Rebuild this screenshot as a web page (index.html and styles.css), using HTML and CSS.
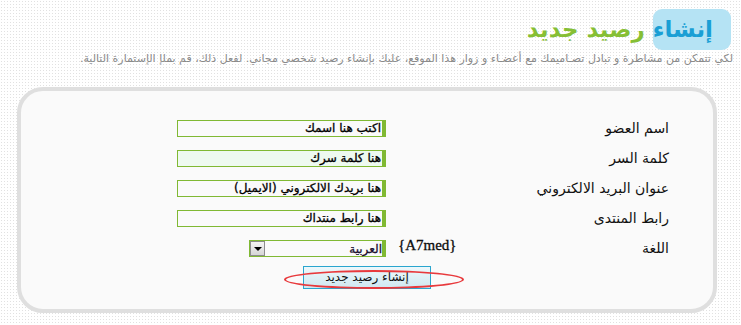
FILE: index.html
```html
<!DOCTYPE html>
<html lang="ar" dir="rtl">
<head>
    <meta charset="UTF-8">
    <title>إنشاء رصيد جديد</title>
    <link rel="stylesheet" href="styles.css">
</head>
<body>
    <div class="header">
        <h1><span class="first">إنشاء</span> رصيد جديد</h1>
        <p class="intro">لكي تتمكن من مشاطرة و تبادل تصـاميمك مع أعضـاء و زوار هذا الموقع، عليك بإنشاء رصيد شخصي مجاني. لفعل ذلك، قم بملإ الإستمارة التالية.</p>
    </div>

    <div class="panel">
        <form class="signup">
            <label>اسم العضو</label>
            <div class="field">اكتب هنا اسمك</div>

            <label>كلمة السر</label>
            <div class="field soft">هنا كلمة سرك</div>

            <label>عنوان البريد الالكتروني</label>
            <div class="field">هنا بريدك الالكتروني (الايميل)</div>

            <label>رابط المنتدى</label>
            <div class="field">هنا رابط منتداك</div>

            <label class="lang">اللغة <span class="tag">{A7med}</span></label>
            <div class="select-wrap">
                <div class="select">
                    <span>العربية</span>
                    <span class="arrow"></span>
                </div>
            </div>
        </form>
        <div class="actions">
            <div class="btn">إنشاء رصيد جديد<span class="circle"></span></div>
        </div>
    </div>
</body>
</html>
```

FILE: styles.css
```css
body {
    margin: 0;
    width: 741px;
    height: 325px;
    overflow: hidden;
    font-family: Tahoma, "DejaVu Sans", sans-serif;
    background-color: #fff;
    background-image: radial-gradient(#e1e1e1 0.9px, transparent 1px);
    background-size: 3px 3px;
}
.header {
    padding: 9px 10px 0 0;
}
.header h1 {
    margin: 0;
    font-size: 23px;
    line-height: 41px;
    color: #86bf35;
}
.header .first {
    display: inline-block;
    color: #1a9fd5;
    background: #b5e3f4;
    border-radius: 9px;
    padding: 0 18px 0 0;
}
.intro {
    margin: 2px -2px 0 0;
    font-size: 11px;
    line-height: 13px;
    letter-spacing: -0.2px;
    color: #8a8a8a;
    white-space: nowrap;
}
.panel {
    margin: 22px 24px 0 17px;
    width: 692px;
    height: 218px;
    border: 4px solid #dfdfdf;
    border-radius: 26px;
    background: #fafafa;
}
.signup {
    display: grid;
    grid-template-columns: 283px 209px;
    grid-auto-rows: 30px;
    padding: 29px 44px 0 0;
}
.signup label {
    font-size: 14px;
    color: #111;
    line-height: 17px;
}
.signup label.lang {
    display: flex;
    justify-content: space-between;
}
.tag {
    font-family: "Liberation Serif", serif;
    font-size: 15px;
    margin: -3px 0 0 12px;
    direction: ltr;
    -webkit-text-stroke: 0.3px #000;
}
.field {
    height: 17px;
    box-sizing: border-box;
    border: 1px solid #80b933;
    border-right-width: 4px;
    background: #fafafa;
    font-size: 12px;
    line-height: 15px;
    padding-right: 1px;
    color: #000;
    -webkit-text-stroke: 0.3px #000;
}
.field.soft {
    background: #eefaf0;
}
.select-wrap {
    display: flex;
}
.select {
    width: 137px;
    height: 17px;
    box-sizing: border-box;
    border: 1px solid #80b933;
    border-right-width: 4px;
    display: flex;
    justify-content: space-between;
    align-items: center;
    font-size: 12px;
    color: #1a1030;
    -webkit-text-stroke: 0.3px #1a1030;
    background: #fafafa;
}
.arrow {
    width: 15px;
    height: 15px;
    box-sizing: border-box;
    border: 1px solid #8d8d8d;
    background: linear-gradient(#f4f4f4, #d6d6d6);
    position: relative;
}
.arrow::after {
    content: "";
    position: absolute;
    left: 3px;
    top: 5px;
    border-left: 4px solid transparent;
    border-right: 4px solid transparent;
    border-top: 4px solid #000;
}
.actions {
    display: flex;
    justify-content: center;
    margin-top: -4px;
}
.btn {
    position: relative;
    width: 128px;
    height: 23px;
    box-sizing: border-box;
    border: 1px solid #2aa6cf;
    background: linear-gradient(#eef8fb, #cfe8f1);
    font-size: 12px;
    color: #111;
    text-align: center;
    line-height: 21px;
}
.circle {
    position: absolute;
    left: -20px;
    top: 3px;
    width: 180px;
    height: 19px;
    box-sizing: border-box;
    border: 2px solid #e8393c;
    border-radius: 50%;
}
```
